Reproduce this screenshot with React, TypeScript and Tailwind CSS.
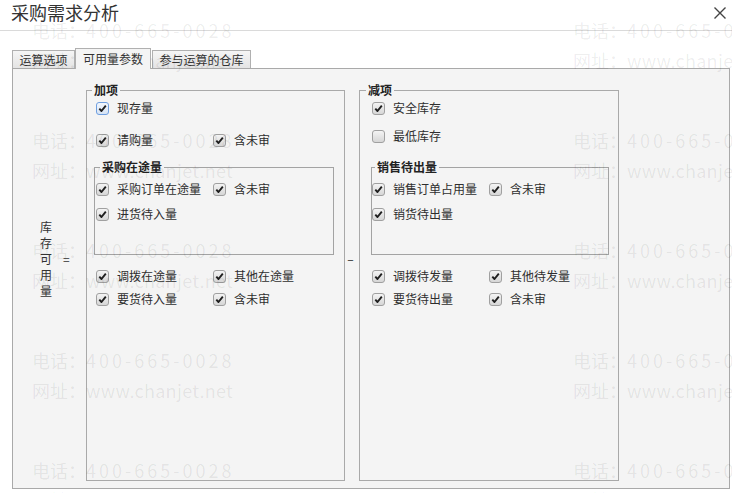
import React from "react";

const FONT = { fontFamily: '"Noto Sans CJK SC", "Noto Sans", sans-serif' };

function Box({ checked = true, focus = false }: { checked?: boolean; focus?: boolean }) {
  return (
    <span
      className={
        focus
          ? "w-[13px] h-[13px] rounded-[3px] border border-[#6f9fe0] bg-linear-to-b from-[#f3f7fd] to-[#d6e3f4] flex items-center justify-center shrink-0"
          : "w-[13px] h-[13px] rounded-[3px] border border-[#a0a0a0] bg-linear-to-b from-[#f4f4f4] to-[#d6d6d6] flex items-center justify-center shrink-0"
      }
    >
      {checked && (
        <svg width="9" height="9" viewBox="0 0 9 9">
          <path d="M1.3 4.6 L3.5 7 L7.8 1.6" stroke="#1f1f1f" strokeWidth="1.9" fill="none" strokeLinejoin="round" />
        </svg>
      )}
    </span>
  );
}

function Item({ label, checked = true, focus = false }: { label: string; checked?: boolean; focus?: boolean }) {
  return (
    <div className="flex items-center gap-[8px]">
      <Box checked={checked} focus={focus} />
      <span className="text-[12px] leading-[16px] text-[#2e2e2e]">{label}</span>
    </div>
  );
}

function Row({ a, b, className = "" }: { a: React.ReactNode; b?: React.ReactNode; className?: string }) {
  return (
    <div className={"flex items-center h-[20px] " + className}>
      <div className="w-[117px] shrink-0">{a}</div>
      {b}
    </div>
  );
}

function Watermark() {
  const blocks = [0, 1, 2, 3, 4];
  return (
    <div className="absolute inset-0 pointer-events-none flex flex-col pt-[15px] pl-[32px] text-[18px] leading-[30px] text-[rgba(0,0,0,0.075)] whitespace-nowrap">
      {blocks.map((i) => (
        <div key={i} className="flex flex-col h-[110px] shrink-0">
          <div className="flex">
            <div className="w-[541px] shrink-0">
              电话：<span className="tracking-[3px]">400-665-0028</span>
            </div>
            <div className="w-[541px] shrink-0">
              电话：<span className="tracking-[3px]">400-665-0028</span>
            </div>
          </div>
          <div className="flex">
            <div className="w-[541px] shrink-0">
              网址：<span className="tracking-[0.3px]">www.chanjet.net</span>
            </div>
            <div className="w-[541px] shrink-0">
              网址：<span className="tracking-[0.3px]">www.chanjet.net</span>
            </div>
          </div>
        </div>
      ))}
    </div>
  );
}

export default function App() {
  return (
    <div className="relative w-[732px] h-[493px] bg-white overflow-hidden" style={FONT}>
      {/* header */}
      <div className="h-[31px] flex items-start justify-between border-b border-[#dadada] pl-[11px] pr-[6px]">
        <div className="text-[18px] leading-[24px] text-[#333]">采购需求分析</div>
        <svg className="mt-[7px]" width="12" height="12" viewBox="0 0 12 12">
          <path d="M0.5 0.5 L11.5 11.5 M11.5 0.5 L0.5 11.5" stroke="#444" strokeWidth="1.4" />
        </svg>
      </div>

      {/* tabs */}
      <div className="pt-[17px] pl-[12px] flex items-end">
        <div className="w-[63px] h-[18px] border border-b-0 border-[#b0b0b0] bg-linear-to-b from-[#f5f5f5] to-[#e4e4e4] flex items-center justify-center text-[12px] text-[#333]">
          运算选项
        </div>
        <div className="relative z-10 w-[76px] h-[21px] -mb-px border border-b-0 border-[#b0b0b0] bg-[#f4f4f4] flex items-center justify-center text-[12px] text-[#333]">
          可用量参数
        </div>
        <div className="ml-px w-[99px] h-[18px] border border-b-0 border-[#b0b0b0] bg-linear-to-b from-[#f5f5f5] to-[#e4e4e4] flex items-center justify-center text-[12px] text-[#333]">
          参与运算的仓库
        </div>
      </div>

      {/* panel */}
      <div className="ml-[12px] w-[718px] h-[421px] border border-[#a9a9a9] bg-[#f4f4f4] flex items-start">
        {/* left label */}
        <div className="w-[73px] shrink-0 pt-[150px] flex items-center text-[12px] leading-[16px] text-[#333]">
          <div className="ml-[27px] w-[12px] flex flex-col">
            <span>库</span>
            <span>存</span>
            <span>可</span>
            <span>用</span>
            <span>量</span>
          </div>
          <div className="ml-[11px]">=</div>
        </div>

        {/* plus */}
        <fieldset className="mt-[13px] w-[259px] h-[399px] shrink-0 border border-[#a9a9a9]">
          <legend className="ml-[5px] px-[2px] text-[12px] leading-[16px] font-bold text-[#222]">加项</legend>
          <div className="flex flex-col">
            <div className="pl-[9px] flex flex-col">
              <Row a={<Item label="现存量" focus />} />
              <Row className="mt-[12px]" a={<Item label="请购量" />} b={<Item label="含未审" />} />
            </div>
            <fieldset className="mt-[9px] ml-[7px] w-[240px] border border-[#a3a3a3] pb-[30px]">
              <legend className="ml-[5px] px-[2px] text-[12px] leading-[16px] font-bold text-[#222]">采购在途量</legend>
              <div className="pl-[1px] pt-[4px] flex flex-col gap-[5px]">
                <Row a={<Item label="采购订单在途量" />} b={<Item label="含未审" />} />
                <Row a={<Item label="进货待入量" />} />
              </div>
            </fieldset>
            <div className="pl-[9px] pt-[11px] flex flex-col gap-[3px]">
              <Row a={<Item label="调拨在途量" />} b={<Item label="其他在途量" />} />
              <Row a={<Item label="要货待入量" />} b={<Item label="含未审" />} />
            </div>
          </div>
        </fieldset>

        {/* minus sign */}
        <div className="w-[14px] shrink-0 pt-[182px] pr-[3px] flex justify-center text-[12px] leading-[16px] text-[#222]">–</div>

        {/* minus */}
        <fieldset className="mt-[13px] w-[260px] h-[399px] shrink-0 border border-[#a9a9a9]">
          <legend className="ml-[6px] px-[2px] text-[12px] leading-[16px] font-bold text-[#222]">减项</legend>
          <div className="flex flex-col">
            <div className="pl-[12px] flex flex-col">
              <Row a={<Item label="安全库存" />} />
              <Row className="mt-[8px]" a={<Item label="最低库存" checked={false} />} />
            </div>
            <fieldset className="mt-[13px] ml-[11px] w-[238px] border border-[#a3a3a3] pb-[30px]">
              <legend className="ml-[3px] px-[2px] text-[12px] leading-[16px] font-bold text-[#222]">销售待出量</legend>
              <div className="pt-[4px] flex flex-col gap-[5px]">
                <Row a={<Item label="销售订单占用量" />} b={<Item label="含未审" />} />
                <Row a={<Item label="销货待出量" />} />
              </div>
            </fieldset>
            <div className="pl-[12px] pt-[11px] flex flex-col gap-[3px]">
              <Row a={<Item label="调拨待发量" />} b={<Item label="其他待发量" />} />
              <Row a={<Item label="要货待出量" />} b={<Item label="含未审" />} />
            </div>
          </div>
        </fieldset>
      </div>

      <Watermark />
    </div>
  );
}
